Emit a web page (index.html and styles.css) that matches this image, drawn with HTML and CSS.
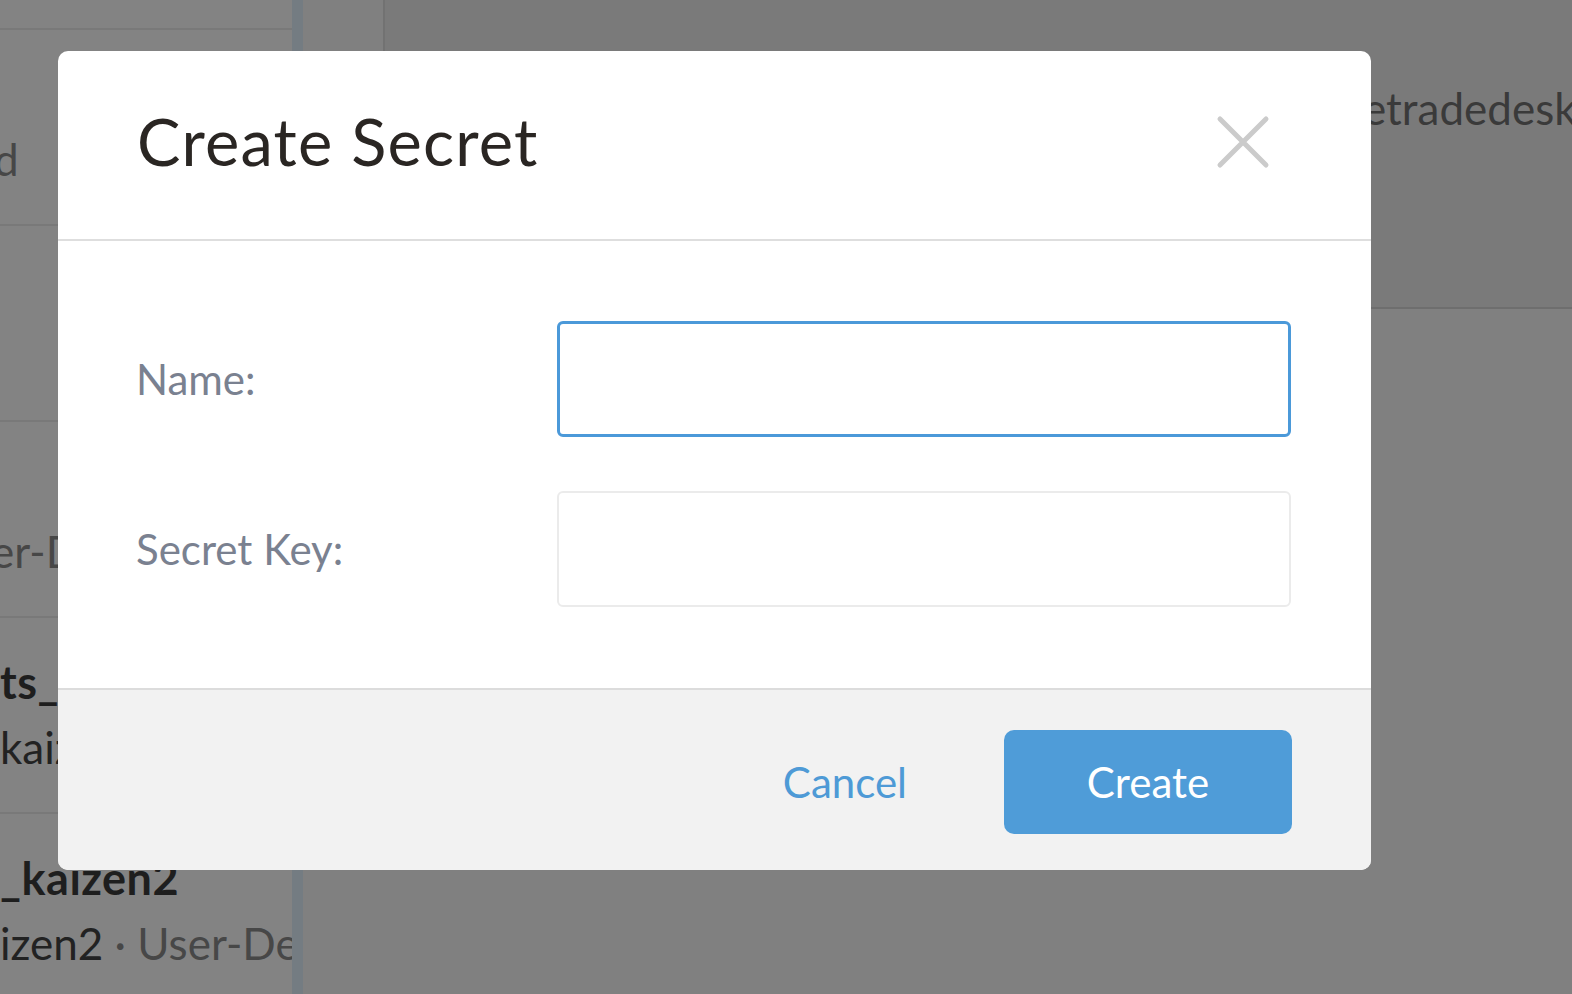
FILE: index.html
```html
<!DOCTYPE html>
<html lang="en">
<head>
<meta charset="utf-8">
<title>Create Secret</title>
<link rel="stylesheet" href="styles.css">
</head>
<body>
<div class="app">
  <aside class="list">
    <div class="list-top"></div>
    <div class="row"><div class="row-title">&nbsp;</div><div class="row-sub shift-d">d</div></div>
    <div class="row"><div class="row-title">&nbsp;</div><div class="row-sub">&nbsp;</div></div>
    <div class="row"><div class="row-title">&nbsp;</div><div class="row-sub shift-e">er-D</div></div>
    <div class="row"><div class="row-title">ts_kaizen</div><div class="row-sub"><span class="dark">kaizen</span> · User-Defined</div></div>
    <div class="row"><div class="row-title">_kaizen2</div><div class="row-sub"><span class="dark">izen2</span> · User-Defined</div></div>
  </aside>
  <div class="strip"></div>
  <div class="gutter"></div>
  <main class="main">
    <div class="main-head"><span class="head-text">etradedesk_kaizen</span></div>
  </main>
</div>

<div class="modal" role="dialog" aria-label="Create Secret">
  <header class="modal-head">
    <h1 class="modal-title">Create Secret</h1>
    <button class="close" aria-label="Close">
      <svg width="54" height="54" viewBox="0 0 54 54"><path d="M4 4 L50 50 M50 4 L4 50" stroke="#cbcbcb" stroke-width="5" stroke-linecap="round" fill="none"/></svg>
    </button>
  </header>
  <div class="modal-body">
    <label class="field-label" for="name">Name:</label>
    <input class="field field-focus" id="name" type="text">
    <label class="field-label" for="key">Secret Key:</label>
    <input class="field" id="key" type="text">
  </div>
  <footer class="modal-foot">
    <button class="btn-cancel">Cancel</button>
    <button class="btn-create">Create</button>
  </footer>
</div>
</body>
</html>
```

FILE: styles.css
```css
html, body {
  margin: 0;
  padding: 0;
}
body {
  width: 1572px;
  height: 994px;
  overflow: hidden;
  position: relative;
  font-family: Lato, "Noto Sans", sans-serif;
  background: #808080;
}
.app {
  display: flex;
  height: 994px;
}
.list {
  width: 292px;
  background: #838383;
  overflow: hidden;
  flex: none;
}
.list-top {
  height: 30px;
  box-sizing: border-box;
  border-bottom: 2px solid #797979;
}
.row {
  height: 196px;
  box-sizing: border-box;
  border-bottom: 2px solid #797979;
  padding-top: 32px;
  white-space: nowrap;
}
.row-title {
  font-size: 45px;
  line-height: 65px;
  font-weight: 700;
  color: #1e1e1e;
  letter-spacing: 0.5px;
}
.row-sub {
  font-size: 44px;
  line-height: 65px;
  color: #474747;
}
.row-sub .dark {
  color: #222;
}
.shift-e {
  margin-left: -9px;
}
.shift-d {
  margin-left: -6px;
}
.strip {
  width: 11px;
  background: #747c82;
  flex: none;
}
.gutter {
  width: 80px;
  flex: none;
}
.main {
  flex: 1;
  overflow: hidden;
}
.main-head {
  height: 309px;
  background: #7a7a7a;
  border-left: 2px solid #727272;
  border-bottom: 2px solid #6e6e6e;
  padding-left: 978px;
  padding-top: 82px;
  box-sizing: border-box;
  white-space: nowrap;
}
.head-text {
  font-size: 44px;
  color: #3a3a3a;
}

/* Modal */
.modal {
  position: absolute;
  top: 51px;
  left: 58px;
  width: 1313px;
  height: 819px;
  background: #fff;
  border-radius: 10px;
  overflow: hidden;
  display: flex;
  flex-direction: column;
}
.modal-head {
  height: 188px;
  flex: none;
  border-bottom: 2px solid #dedede;
  display: flex;
  align-items: center;
  justify-content: space-between;
  padding: 0 101px 0 79px;
}
.modal-title {
  margin: -8px 0 0 0;
  font-size: 65px;
  font-weight: 400;
  color: #2a2623;
  letter-spacing: 1.2px;
}
.close {
  border: 0;
  background: none;
  padding: 0;
  width: 54px;
  height: 54px;
  margin-top: -6px;
  display: block;
}
.close svg { display: block; }
.modal-body {
  height: 447px;
  flex: none;
  box-sizing: border-box;
  padding: 80px 79px 81px 78px;
  display: grid;
  grid-template-columns: 421px 734px;
  grid-template-rows: 116px 116px;
  row-gap: 54px;
  align-items: center;
}
.field-label {
  font-size: 42px;
  color: #7a8190;
}
.field {
  height: 116px;
  width: 734px;
  box-sizing: border-box;
  border: 2px solid #ebebeb;
  border-radius: 6px;
  background: #fff;
  outline: none;
  font-size: 40px;
}
.field-focus {
  border: 3px solid #4b99d9;
}
.modal-foot {
  flex: 1;
  background: #f2f2f2;
  border-top: 2px solid #dcdcdc;
  display: flex;
  align-items: center;
  justify-content: flex-end;
  padding: 4px 79px 0 0;
}
.btn-cancel {
  border: 0;
  background: none;
  padding: 0;
  margin-right: 97px;
  font-family: Lato, "Noto Sans", sans-serif;
  font-size: 42px;
  color: #4e9ad6;
}
.btn-create {
  width: 288px;
  height: 104px;
  border: 0;
  border-radius: 10px;
  background: #4f9cd8;
  color: #fff;
  font-family: Lato, "Noto Sans", sans-serif;
  font-size: 42px;
}
```
